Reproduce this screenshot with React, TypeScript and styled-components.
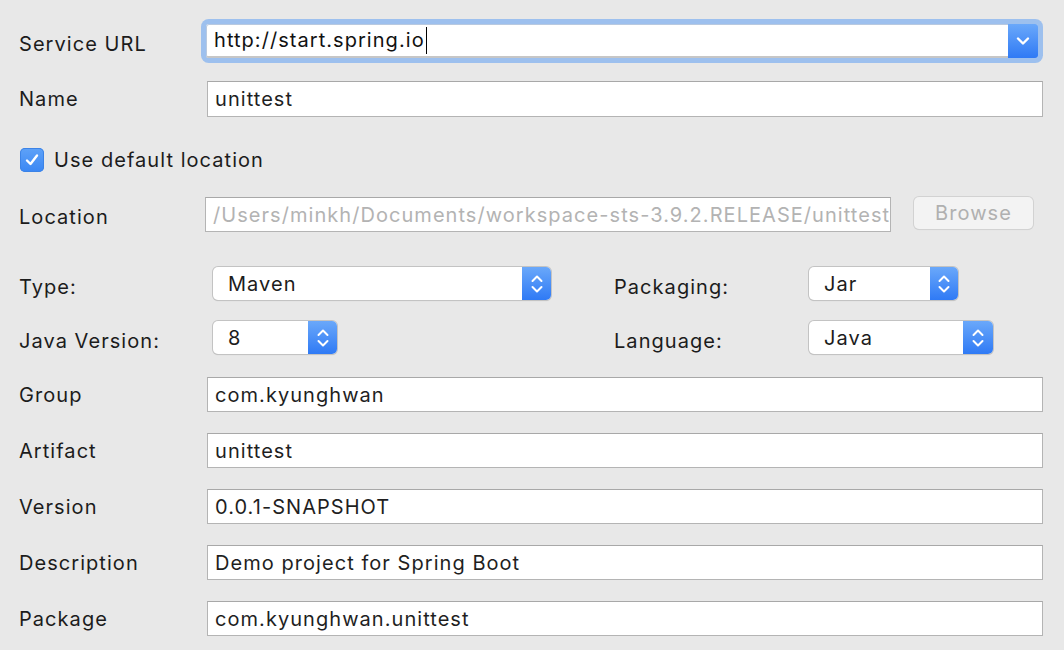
import React from "react";
import styled, { createGlobalStyle } from "styled-components";

const Global = createGlobalStyle`
  html, body { margin: 0; padding: 0; background: #e8e8e8; }
  body { font-family: Inter, "Liberation Sans", sans-serif; color: #1c1c1c; }
`;

const Page = styled.div`
  width: 1064px;
  height: 650px;
  background: #e8e8e8;
  display: flex;
  flex-direction: column;
  padding-left: 19px;
  box-sizing: border-box;
  overflow: hidden;
  letter-spacing: 1.05px;
`;

const Row = styled.div<{ $top: number; $h: number }>`
  display: flex;
  align-items: center;
  margin-top: ${(p) => p.$top}px;
  height: ${(p) => p.$h}px;
`;

const Label = styled.div<{ $w?: number; $drop?: number }>`
  width: ${(p) => p.$w ?? 188}px;
  flex: none;
  font-size: 20px;
  color: #1c1c1c;
  padding-top: ${(p) => (p.$drop ?? 0) * 2}px;
  box-sizing: border-box;
`;

const TextField = styled.div<{ $w: number; $disabled?: boolean }>`
  width: ${(p) => p.$w}px;
  height: 100%;
  box-sizing: border-box;
  background: #fff;
  border: 1px solid #b4b4b4;
  border-top-color: #a8a8a8;
  display: flex;
  align-items: center;
  padding-left: 7px;
  font-size: 20px;
  color: ${(p) => (p.$disabled ? "#b3b3b3" : "#1f1f1f")};
  white-space: nowrap;
  overflow: hidden;
`;

const Combo = styled.div`
  width: 832px;
  height: 100%;
  box-sizing: border-box;
  background: #fff;
  border-radius: 3px;
  box-shadow: 0 0 0 5px #9dc0ee, inset 0 0 0 1px #b8c9e0;
  display: flex;
  align-items: stretch;
  overflow: hidden;
  margin-left: -1px;
`;

const ComboText = styled.div`
  flex: 1;
  display: flex;
  align-items: center;
  padding-left: 8px;
  font-size: 20px;
  color: #111;
  border-bottom: 2px solid #c6c6c6;
`;

const Caret = styled.span`
  display: inline-block;
  width: 1.5px;
  height: 27px;
  background: #000;
  margin-left: 1px;
`;

const BlueBtn = styled.div<{ $w: number }>`
  width: ${(p) => p.$w}px;
  flex: none;
  background: linear-gradient(#6aa8fa, #2f7af5);
  display: flex;
  align-items: center;
  justify-content: center;
`;

const Popup = styled.div<{ $w: number }>`
  width: ${(p) => p.$w}px;
  height: 100%;
  box-sizing: border-box;
  background: #fff;
  border-radius: 5px;
  box-shadow: 0 0 0 1px #c3c3c3, 0 1px 1px rgba(0, 0, 0, 0.18);
  display: flex;
  overflow: hidden;
  flex: none;
`;

const PopupText = styled.div`
  flex: 1;
  display: flex;
  align-items: center;
  padding-left: 15px;
  font-size: 20px;
  color: #1c1c1c;
`;

const CheckBox = styled.div`
  width: 24px;
  height: 24px;
  margin-left: 1px;
  border-radius: 5px;
  background: linear-gradient(#5ea2f8, #3a87f4);
  box-shadow: inset 0 0 0 1px #3c83e6;
  display: flex;
  align-items: center;
  justify-content: center;
  margin-right: 10px;
`;

const CheckLabel = styled.div`
  font-size: 20px;
  color: #1c1c1c;
`;

const BrowseButton = styled.div`
  margin-left: 23px;
  width: 119px;
  height: 32px;
  align-self: flex-start;
  box-sizing: border-box;
  border-radius: 5px;
  background: #f3f3f3;
  box-shadow: 0 0 0 1px #d2d2d2, 0 1px 1px rgba(0, 0, 0, 0.08);
  display: flex;
  align-items: center;
  justify-content: center;
  font-size: 20px;
  color: #b0b0b0;
`;

const Spacer = styled.div<{ $w: number }>`
  width: ${(p) => p.$w}px;
  flex: none;
`;

const Stepper = () => (
  <svg width="14" height="22" viewBox="0 0 14 22">
    <path d="M2.5 8 L7 3.5 L11.5 8" fill="none" stroke="#fff" strokeWidth="2" strokeLinecap="round" strokeLinejoin="round" />
    <path d="M2.5 14 L7 18.5 L11.5 14" fill="none" stroke="#fff" strokeWidth="2" strokeLinecap="round" strokeLinejoin="round" />
  </svg>
);

const ChevronDown = () => (
  <svg width="16" height="12" viewBox="0 0 16 12">
    <path d="M3 3.5 L8 8.5 L13 3.5" fill="none" stroke="#fff" strokeWidth="2.4" strokeLinecap="round" strokeLinejoin="round" />
  </svg>
);

const Check = () => (
  <svg width="18" height="18" viewBox="0 0 18 18">
    <path d="M4 9.5 L7.5 13 L14 4.5" fill="none" stroke="#fff" strokeWidth="2.4" strokeLinecap="round" strokeLinejoin="round" />
  </svg>
);

const fields: { label: string; value: string; top: number }[] = [
  { label: "Group", value: "com.kyunghwan", top: 23 },
  { label: "Artifact", value: "unittest", top: 21 },
  { label: "Version", value: "0.0.1-SNAPSHOT", top: 21 },
  { label: "Description", value: "Demo project for Spring Boot", top: 21 },
  { label: "Package", value: "com.kyunghwan.unittest", top: 21 },
];

export default function App() {
  return (
    <Page>
      <Global />
      <Row $top={24} $h={34}>
        <Label $drop={3}>Service URL</Label>
        <Combo>
          <ComboText>
            http://start.spring.io
            <Caret />
          </ComboText>
          <BlueBtn $w={30}>
            <ChevronDown />
          </BlueBtn>
        </Combo>
      </Row>
      <Row $top={23} $h={36}>
        <Label>Name</Label>
        <TextField $w={836}>unittest</TextField>
      </Row>
      <Row $top={31} $h={24}>
        <CheckBox>
          <Check />
        </CheckBox>
        <CheckLabel>Use default location</CheckLabel>
      </Row>
      <Row $top={25} $h={35}>
        <Label $w={186} $drop={2}>Location</Label>
        <TextField $w={686} $disabled>
          /Users/minkh/Documents/workspace-sts-3.9.2.RELEASE/unittest
        </TextField>
        <BrowseButton>Browse</BrowseButton>
      </Row>
      <Row $top={35} $h={33}>
        <Label $w={194} $drop={3}>Type:</Label>
        <Popup $w={338}>
          <PopupText>Maven</PopupText>
          <BlueBtn $w={29}>
            <Stepper />
          </BlueBtn>
        </Popup>
        <Spacer $w={63} />
        <Label $w={195} $drop={3}>Packaging:</Label>
        <Popup $w={149}>
          <PopupText>Jar</PopupText>
          <BlueBtn $w={28}>
            <Stepper />
          </BlueBtn>
        </Popup>
      </Row>
      <Row $top={21} $h={33}>
        <Label $w={194} $drop={3}>Java Version:</Label>
        <Popup $w={124}>
          <PopupText>8</PopupText>
          <BlueBtn $w={29}>
            <Stepper />
          </BlueBtn>
        </Popup>
        <Spacer $w={277} />
        <Label $w={195} $drop={3}>Language:</Label>
        <Popup $w={184}>
          <PopupText>Java</PopupText>
          <BlueBtn $w={30}>
            <Stepper />
          </BlueBtn>
        </Popup>
      </Row>
      {fields.map((f) => (
        <Row key={f.label} $top={f.top} $h={35}>
          <Label>{f.label}</Label>
          <TextField $w={836}>{f.value}</TextField>
        </Row>
      ))}
    </Page>
  );
}
